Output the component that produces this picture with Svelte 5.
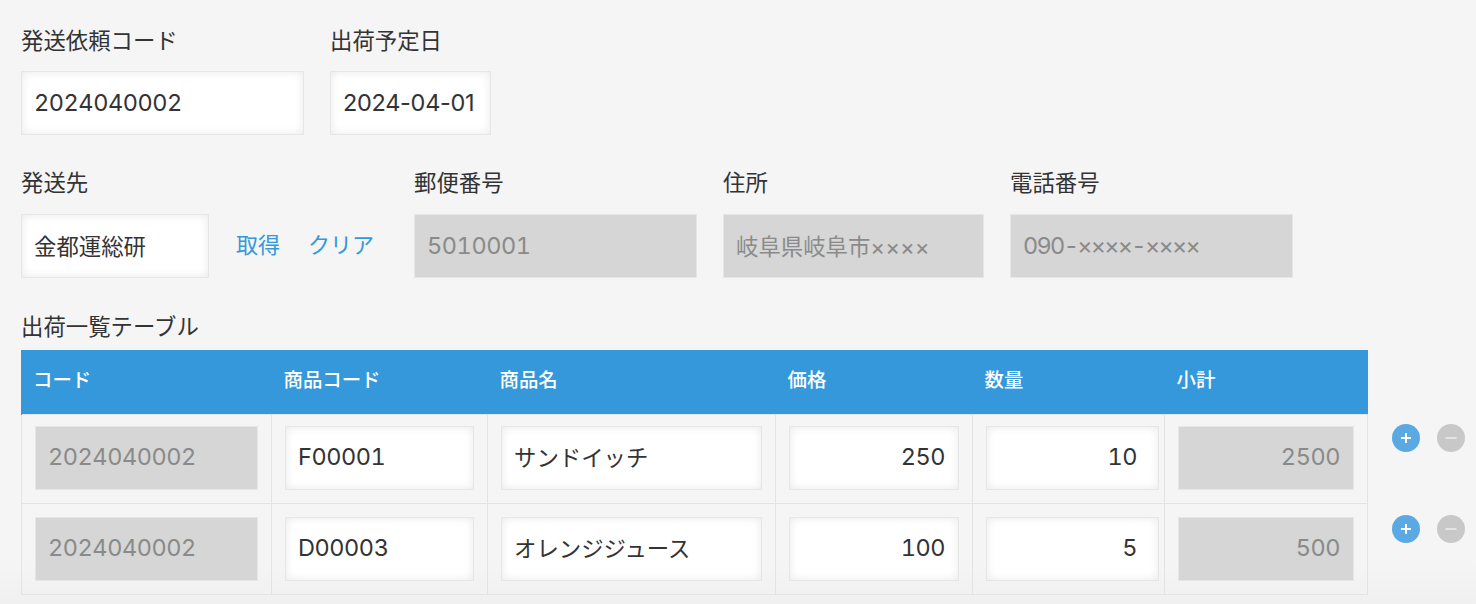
<script>
	const rows = [
		{ code: '2024040002', item: 'F00001', name: 'サンドイッチ', price: '250', qty: '10', total: '2500' },
		{ code: '2024040002', item: 'D00003', name: 'オレンジジュース', price: '100', qty: '5', total: '500' }
	];
</script>

<div class="page">
	<div class="form-row first">
		<div class="field">
			<label for="req">発送依頼コード</label>
			<input id="req" class="num w-req" value="2024040002" />
		</div>
		<div class="field">
			<label for="date">出荷予定日</label>
			<input id="date" class="num w-date" value="2024-04-01" />
		</div>
	</div>

	<div class="form-row second">
		<div class="field">
			<label for="dest">発送先</label>
			<input id="dest" class="jp w-dest" value="金都運総研" />
		</div>
		<div class="links">
			<a href="#get">取得</a>
			<a href="#clear">クリア</a>
		</div>
		<div class="field">
			<label for="zip">郵便番号</label>
			<input id="zip" class="num w-zip" value="5010001" disabled />
		</div>
		<div class="field">
			<label for="addr">住所</label>
			<input id="addr" class="jp w-addr" value="岐阜県岐阜市××××" disabled />
		</div>
		<div class="field">
			<label for="tel">電話番号</label>
			<input id="tel" class="num w-tel" value="090-××××-××××" disabled />
		</div>
	</div>

	<div class="table-title">出荷一覧テーブル</div>
	<table>
		<colgroup>
			<col style="width: 250px" />
			<col style="width: 216px" />
			<col style="width: 288px" />
			<col style="width: 197px" />
			<col style="width: 192px" />
			<col style="width: 203px" />
			<col style="width: 109px" />
		</colgroup>
		<thead>
			<tr>
				<th>コード</th>
				<th>商品コード</th>
				<th>商品名</th>
				<th>価格</th>
				<th>数量</th>
				<th>小計</th>
				<th class="blank"></th>
			</tr>
		</thead>
		<tbody>
			{#each rows as row}
				<tr>
					<td><input class="num" value={row.code} disabled /></td>
					<td><input class="num" value={row.item} /></td>
					<td><input class="jp" value={row.name} /></td>
					<td><input class="num right" value={row.price} /></td>
					<td class="qty"><input class="num right" value={row.qty} /></td>
					<td><input class="num right" value={row.total} disabled /></td>
					<td class="ops">
						<div class="op-buttons">
							<button class="round plus" aria-label="追加">
								<svg viewBox="0 0 28 28" width="28" height="28"><path d="M14 9v10M9 14h10" /></svg>
							</button>
							<button class="round minus" aria-label="削除">
								<svg viewBox="0 0 28 28" width="28" height="28"><path d="M8.500 14h11" /></svg>
							</button>
						</div>
					</td>
				</tr>
			{/each}
		</tbody>
	</table>
</div>

<style>
	:global(body) {
		margin: 0;
		background: #f4f4f4;
	}

	.page {
		height: 604px;
		box-sizing: border-box;
		padding: 23px 0 0 21px;
		overflow: hidden;
		color: #333;
		font-family: 'Inter', 'Noto Sans CJK JP', sans-serif;
		background: linear-gradient(to bottom, #f5f5f5 0, #f5f5f5 560px, #f0f0f0 604px);
	}

	.form-row {
		display: flex;
		gap: 26px;
	}

	.second {
		margin-top: 30px;
	}

	.field {
		display: flex;
		flex-direction: column;
	}

	label,
	.table-title {
		font-family: 'Noto Sans CJK JP', sans-serif;
		font-size: 22.4px;
		line-height: 32px;
		color: #333;
	}

	label {
		margin-bottom: 16px;
	}

	.second label {
		margin-bottom: 17px;
	}

	input {
		box-sizing: border-box;
		display: block;
		width: 100%;
		height: 64px;
		padding: 0 13px 0 12px;
		border: 1px solid #e6e6e6;
		border-radius: 0;
		outline: none;
		background: #fff;
		box-shadow: inset 0 0 10px rgba(0, 0, 0, 0.09);
		color: #333;
	}

	input:disabled {
		background: #d5d6d5;
		box-shadow: none;
		color: #8a8a8a;
		-webkit-text-fill-color: #8a8a8a;
		opacity: 1;
	}

	.num {
		font-family: 'Inter', 'Noto Sans CJK JP', sans-serif;
		font-size: 23.5px;
		font-variant-numeric: tabular-nums;
		letter-spacing: -0.45px;
		padding-bottom: 2px;
	}

	.jp {
		font-family: 'Inter', 'Noto Sans CJK JP', sans-serif;
		font-size: 22.4px;
		padding-bottom: 3px;
	}

	.right {
		text-align: right;
	}

	.w-req {
		width: 283px;
	}
	.w-date {
		width: 161px;
		padding-right: 4px;
		font-variant-numeric: normal;
		letter-spacing: -0.3px;
	}
	.w-dest {
		width: 188px;
	}
	.w-zip {
		width: 283px;
	}
	.w-addr {
		width: 261px;
	}
	.w-tel {
		width: 283px;
		letter-spacing: -1.7px;
	}

	.links {
		display: flex;
		gap: 28px;
		align-items: center;
		height: 64px;
		margin: 47px 14px 0 1px;
	}

	.links a {
		font-family: 'Noto Sans CJK JP', sans-serif;
		font-size: 22px;
		color: #3498db;
		text-decoration: none;
		margin-bottom: 3px;
	}

	.table-title {
		margin-top: 31px;
		margin-bottom: 9px;
	}

	table {
		table-layout: fixed;
		width: 1455px;
		border-collapse: collapse;
	}

	th {
		height: 64px;
		box-sizing: border-box;
		padding: 0 13px 7px 12px;
		background: #3498db;
		color: #fff;
		font-family: 'Noto Sans CJK JP', sans-serif;
		font-size: 19.4px;
		font-weight: 500;
		text-align: left;
	}

	th:first-child {
		border-left: 1px solid #3498db;
		padding-left: 11px;
	}

	th.blank {
		background: none;
	}

	td {
		padding: 13px;
		border: 1px solid #e3e3e3;
	}

	tbody tr:first-child td {
		padding-top: 11px;
	}

	td.qty {
		padding-right: 5px;
	}

	.qty input {
		padding-right: 21px;
	}

	tbody tr td.ops {
		border: none;
		padding: 12px 0 0 24px;
		vertical-align: top;
	}

	tbody tr:first-child td.ops {
		padding-top: 10px;
	}

	.op-buttons {
		display: flex;
		gap: 17px;
	}

	.round {
		width: 28px;
		height: 28px;
		padding: 0;
		border: none;
		border-radius: 50%;
		cursor: pointer;
	}

	.round svg {
		display: block;
	}

	.round path {
		fill: none;
		stroke: #fff;
		stroke-width: 2;
	}

	.plus {
		background: #5aa9e2;
	}

	.minus {
		background: #c8c8c8;
	}

	.minus path {
		stroke: #e4e4e4;
	}
</style>
